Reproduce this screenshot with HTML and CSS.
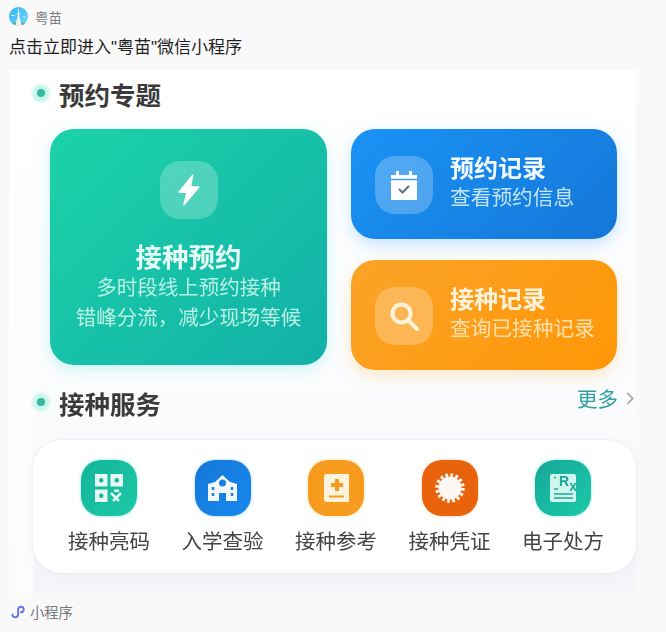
FILE: index.html
```html
<!DOCTYPE html>
<html lang="zh-CN">
<head>
  <meta charset="UTF-8" />
  <title>粤苗</title>
  <link rel="stylesheet" href="styles.css">
</head>
<body>
  <header class="source">
    <svg class="avatar" viewBox="0 0 20 20">
      <defs>
        <linearGradient id="sky" x1="0" y1="0" x2="1" y2="1">
          <stop offset="0" stop-color="#2fb4f5"/>
          <stop offset="1" stop-color="#6fd8fa"/>
        </linearGradient>
      </defs>
      <circle cx="10" cy="10" r="10" fill="url(#sky)"/>
      <path d="M3.500 17.500Q10 13.500 16.500 17.500Q10 22 3.500 17.500Z" fill="#5fa88e"/>
      <path d="M2 8.500h4v1H2zM14.500 10h3.500v1h-3.500z" fill="#d8f3fd"/>
      <path d="M9.700 1.500h.6l.6 8.500 2.600 10H6.500l2.600-10z" fill="#f3f1ee"/>
      <path d="M8 7h4v.8H8z" fill="#f3f1ee"/>
    </svg>
    <span class="source-name">粤苗</span>
  </header>
  <p class="message">点击立即进入"粤苗"微信小程序</p>

  <main class="poster">
    <div class="section-head">
      <i class="dot"></i>
      <h2>预约专题</h2>
    </div>
    <div class="topics">
      <div class="card card-green">
        <span class="tile">
          <svg viewBox="0 0 24 24" width="34" height="34"><path d="M14.600 1.500 5 13.600h5.600L8.400 22.500 19 9.900h-6z" fill="#fff" stroke="#fff" stroke-linejoin="round"/></svg>
        </span>
        <h3>接种预约</h3>
        <p>多时段线上预约接种</p>
        <p>错峰分流，减少现场等候</p>
      </div>
      <div class="side">
        <div class="card card-row card-blue">
          <span class="tile">
            <svg viewBox="0 0 30 30" width="30" height="30">
              <path d="M2 5h26v25H2z" fill="#fff"/>
              <path d="M7 1h3v6H7zM20 1h3v6h-3z" fill="#fff"/>
              <path d="M2 9.500h26" stroke="#4a9ff0" stroke-width="1.500"/>
              <path d="M10 19l3.500 3.500L20 16" fill="none" stroke="#5a7488" stroke-width="2"/>
            </svg>
          </span>
          <div class="row-text">
            <h4>预约记录</h4>
            <p>查看预约信息</p>
          </div>
        </div>
        <div class="card card-row card-orange">
          <span class="tile">
            <svg viewBox="0 0 32 32" width="32" height="32">
              <circle cx="13.500" cy="13.500" r="9" fill="none" stroke="#fff3dc" stroke-width="4"/>
              <path d="M20 20l9 9" stroke="#fff3dc" stroke-width="4" stroke-linecap="round"/>
            </svg>
          </span>
          <div class="row-text">
            <h4>接种记录</h4>
            <p>查询已接种记录</p>
          </div>
        </div>
      </div>
    </div>

    <div class="section-head section-services">
      <i class="dot"></i>
      <h2>接种服务</h2>
      <a class="more">更多<svg viewBox="0 0 8 14" width="8" height="13"><path d="M1 1l6 6-6 6" fill="none" stroke="#a9adb2" stroke-width="2"/></svg></a>
    </div>
    <div class="services">
      <div class="service">
        <span class="service-icon ic-green">
          <svg viewBox="0 0 28 28" width="28" height="28">
            <path d="M0 0h12.500v12.500H0zM15.500 0H28v12.500H15.500zM0 15.500h12.500V28H0z" fill="#e6f8f3"/>
            <circle cx="6.200" cy="6.200" r="2.200" fill="#17b79c"/><circle cx="21.800" cy="6.200" r="2.200" fill="#17b79c"/><circle cx="6.200" cy="21.800" r="2.200" fill="#17b79c"/>
            <path d="M16 19l8 8M26 19l-8 8" stroke="#e6f8f3" stroke-width="2.500"/>
            <path d="M19 15.500h5v2.500h-5z" fill="#e6f8f3"/>
          </svg>
        </span>
        <span class="service-name">接种亮码</span>
      </div>
      <div class="service">
        <span class="service-icon ic-blue">
          <svg viewBox="0 0 29 26" width="29" height="26">
            <path d="M0 9l7-2 7.500-7L22 7l7 2v17H18v-8h-7v8H0z" fill="#f2f8fe"/>
            <circle cx="14.500" cy="8" r="3.500" fill="#1a7fe0"/>
            <path d="M5 12v3M5 18v3M24 12v3M24 18v3" stroke="#1a7fe0" stroke-width="2.500"/>
          </svg>
        </span>
        <span class="service-name">入学查验</span>
      </div>
      <div class="service">
        <span class="service-icon ic-orange">
          <svg viewBox="0 0 25 28" width="25" height="28">
            <path d="M3 0h22v28H3a3 3 0 0 1-3-3V3a3 3 0 0 1 3-3z" fill="#fff3dd"/>
            <path d="M11 5h4v4h4v4h-4v4h-4v-4H7V9h4z" fill="#f59a1d"/>
            <path d="M5 22.500h15" stroke="#f59a1d" stroke-width="2"/>
          </svg>
        </span>
        <span class="service-name">接种参考</span>
      </div>
      <div class="service">
        <span class="service-icon ic-red">
          <svg viewBox="0 0 30 30" width="30" height="30">
            <circle cx="15" cy="15" r="11.500" fill="#fff8f2"/>
            <circle cx="15" cy="15" r="13" fill="none" stroke="#fff8f2" stroke-width="3.500" stroke-dasharray="2.800 2.305"/>
          </svg>
        </span>
        <span class="service-name">接种凭证</span>
      </div>
      <div class="service">
        <span class="service-icon ic-teal">
          <svg viewBox="0 0 26 28" width="26" height="28">
            <rect width="26" height="28" rx="2" fill="#d0f5ec"/>
            <text x="9" y="12" class="rx">R<tspan dy="5">x</tspan></text>
            <path d="M4 3.500h2M4 15h4M4 20h19M4 24h19" stroke="#17a99a" stroke-width="1.400"/>
          </svg>
        </span>
        <span class="service-name">电子处方</span>
      </div>
    </div>
  </main>

  <footer class="mini">
    <svg viewBox="0 0 15 14" width="15" height="14">
      <path d="M1.500 9.500a2.800 2.800 0 1 0 5.600 0V4.500a2.800 2.800 0 1 1 2.800 2.800" fill="none" stroke="#6a6ff0" stroke-width="1.900" stroke-linecap="round"/>
    </svg>
    <span>小程序</span>
  </footer>
</body>
</html>
```

FILE: styles.css
```css
* {
  box-sizing: border-box;
}
body {
  margin: 0;
  height: 632px;
  overflow: hidden;
  background: #f9f9fa;
  font-family: "Liberation Sans", "Noto Sans CJK SC", sans-serif;
  color: #222;
}
h2, h3, h4, p {
  margin: 0;
  font-weight: 400;
}

.source {
  display: flex;
  align-items: center;
  gap: 7px;
  padding: 7px 0 0 9px;
  height: 26px;
}
.avatar {
  width: 19px;
  height: 19px;
}
.source-name {
  font-size: 13.500px;
  color: #7d7d82;
}
.message {
  margin: 10px 0 0 9px;
  font-size: 17px;
  line-height: 24px;
  color: #1f1f1f;
}

.poster {
  margin: 10px 0 0 9px;
  width: 627px;
  height: 523px;
  padding: 0 0 0 24px;
  background:
    linear-gradient(#ffffff, #fbfcfd) left / 24px 100% no-repeat,
    linear-gradient(#ffffff, #fbfcfe 60%, #f3f5f8);
  filter: blur(0.5px);
}
.section-head {
  display: flex;
  align-items: center;
  height: 46px;
  padding-left: 4px;
}
.section-head h2 {
  margin-left: 14px;
  font-size: 25.500px;
  font-weight: 700;
  color: #3a3a3c;
}
.dot {
  width: 8px;
  height: 8px;
  border-radius: 50%;
  background: #35b89c;
  box-shadow: 0 0 3px 5px #c8f5ec;
}
.topics {
  display: flex;
  gap: 24px;
  margin: 13px 0 0 17px;
  align-items: flex-start;
}
.side {
  display: flex;
  flex-direction: column;
  gap: 21px;
}
.card {
  color: #fff;
  border-radius: 24px;
}
.card-green {
  width: 277px;
  height: 236px;
  padding-top: 32px;
  text-align: center;
  background: linear-gradient(135deg, #1cd3a8, #12b0a8);
  box-shadow: 0 4px 14px rgba(60, 220, 210, 0.25);
}
.card-green h3 {
  margin-top: 24px;
  font-size: 26.500px;
  line-height: 30px;
  font-weight: 700;
  color: #e6fbf5;
}
.card-green p {
  font-size: 20.500px;
  line-height: 30px;
  color: #b8f0e4;
}
.card-row {
  display: flex;
  align-items: center;
  gap: 17px;
  width: 266px;
  height: 110px;
  padding-left: 24px;
}
.row-text {
  margin-bottom: 2px;
}
.card-row h4 {
  font-size: 24px;
  line-height: 29px;
  font-weight: 700;
  color: #f2f9ff;
}
.card-row p {
  font-size: 20.700px;
  line-height: 29px;
}
.card-blue {
  background: linear-gradient(135deg, #1a93f5, #1477d8);
  box-shadow: 0 6px 16px rgba(60, 160, 250, 0.28);
}
.card-blue p {
  color: #c4e4fb;
}
.card-orange {
  background: linear-gradient(135deg, #fba429, #ff9606);
  box-shadow: 0 6px 16px rgba(255, 180, 70, 0.28);
}
.card-orange h4 {
  color: #fff3dc;
}
.card-orange p {
  color: #ffe1ae;
}
.tile {
  display: flex;
  align-items: center;
  justify-content: center;
  flex: none;
  width: 58px;
  height: 58px;
  margin: 0 auto;
  border-radius: 20px;
  background: rgba(255, 255, 255, 0.24);
}
.card-row .tile {
  margin: 2px 0 0;
}

.section-services {
  margin-top: 9px;
}
.more {
  display: flex;
  align-items: center;
  gap: 8px;
  margin-left: auto;
  margin-right: 2px;
  font-size: 20.500px;
  color: #2f9fa0;
  transform: translateY(-4px);
}

.services {
  display: flex;
  justify-content: center;
  width: 603px;
  height: 133px;
  margin-top: 15px;
  padding: 20px 0 0 3px;
  border-radius: 28px;
  background: #fff;
  box-shadow: 0 0 2px rgba(190, 195, 205, 0.45), 0 4px 8px rgba(230, 232, 238, 0.35);
}
.service {
  display: flex;
  flex-direction: column;
  align-items: center;
  width: 113.500px;
}
.service-icon {
  display: flex;
  align-items: center;
  justify-content: center;
  width: 56px;
  height: 56px;
  border-radius: 20px;
}
.service-name {
  margin-top: 11px;
  font-size: 20.500px;
  line-height: 30px;
  color: #444446;
  white-space: nowrap;
}
.ic-green {
  background: linear-gradient(135deg, #12b59a, #1cc9a6);
  box-shadow: 0 0 3px #6fe8d8;
}
.ic-blue {
  background: linear-gradient(135deg, #1678d8, #1688ee);
  box-shadow: 0 0 3px #8cc8f5;
}
.ic-orange {
  background: #f79c1e;
  box-shadow: 0 0 3px #ffd79a;
}
.ic-red {
  background: #e9630c;
  box-shadow: 0 0 3px #ffc9a0;
}
.ic-teal {
  background: linear-gradient(135deg, #15a79a, #1ccaa8);
  box-shadow: 0 0 3px #80f0e0;
}
.rx {
  font-size: 14px;
  font-weight: 700;
  fill: #17a99a;
}

.mini {
  display: flex;
  align-items: center;
  gap: 4px;
  height: 37px;
  padding-left: 11px;
  font-size: 14.300px;
  color: #77777c;
}
```
